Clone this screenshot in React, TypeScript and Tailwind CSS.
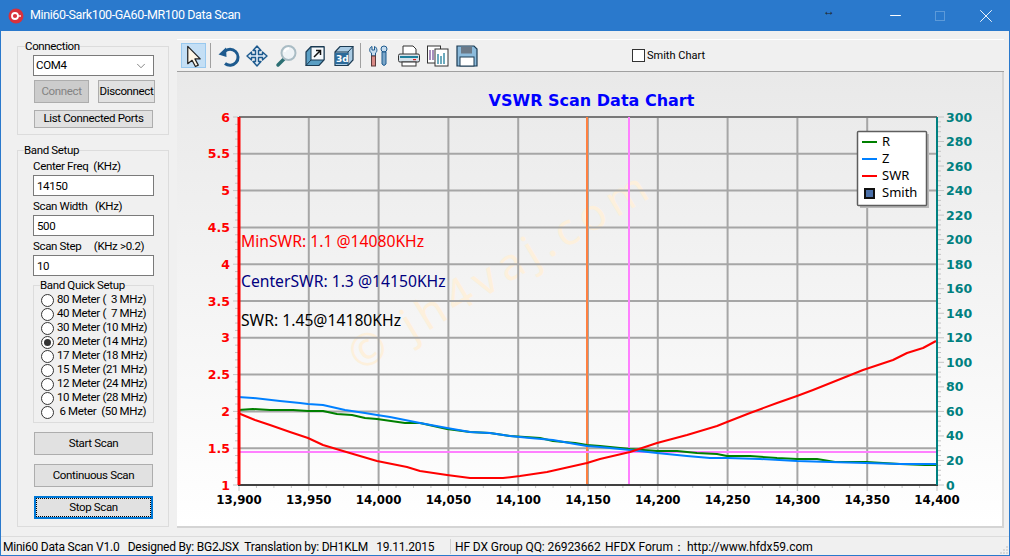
import { ChevronDown, Minus, X } from 'lucide-react'

const bands = [
  '80 Meter (  3 MHz)',
  '40 Meter (  7 MHz)',
  '30 Meter (10 MHz)',
  '20 Meter (14 MHz)',
  '17 Meter (18 MHz)',
  '15 Meter (21 MHz)',
  '12 Meter (24 MHz)',
  '10 Meter (28 MHz)',
  ' 6 Meter  (50 MHz)',
]

const swr = '238,413 255,420 270,425 290,432 308,438 323,445 343,451 360,456 377,461 407,467 420,471 447,475 470,478 503,478 520,476 547,472 587,463 600,459 630,452 657,443 687,435 717,426 727,422 750,413 777,403 797,396 813,390 823,386 843,378 863,370 893,360 907,353 923,348 936,341'
const rLine = '238,410 253,409 270,410 293,410 308,411 323,411 337,414 352,415 365,418 377,419 405,423 420,423 447,429 470,432 490,433 510,436 540,438 553,441 575,443 587,445 600,446 630,449 657,451 677,451 697,453 717,454 727,456 750,456 777,458 797,459 817,459 835,462 866,462 900,464 925,465 936,465'
const zLine = '238,397 253,398 280,401 300,403 308,404 323,405 345,410 365,413 377,415 390,417 420,423 447,428 470,432 490,433 510,436 530,438 553,440 575,444 587,446 600,447 630,450 657,453 677,455 687,456 710,458 727,458 760,459 797,461 830,462 866,463 900,464 936,464'

const yLeft = (v: number) => 485 - (v - 1) * 73.6
const leftLabels = ['1', '1.5', '2', '2.5', '3', '3.5', '4', '4.5', '5', '5.5', '6']
const rightLabels = Array.from({ length: 16 }, (_, i) => i * 20)
const xLabels = ['13,900', '13,950', '14,000', '14,050', '14,100', '14,150', '14,200', '14,250', '14,300', '14,350', '14,400']
const xAt = (i: number) => 239 + i * 69.8

function Chart() {
  return (
    <svg viewBox="177 72 825 454" className="block h-[454px] w-[825px] tracking-normal">
      {/* watermark */}
      <text
        x="360"
        y="372"
        transform="rotate(-31 360 372)"
        fontFamily="'Noto Sans', sans-serif"
        fontSize="44"
        fill="#fdf0dc"
        textLength="340"
      >
        © jh4vaj.com
      </text>

      {xLabels.slice(1, 10).map((_, i) => (
        <line key={i} x1={xAt(i + 1)} x2={xAt(i + 1)} y1="117" y2="485" stroke="#a6a6a6" strokeWidth="2" />
      ))}
      {leftLabels.slice(1, 10).map((_, i) => (
        <line key={i} x1="239" x2="937" y1={yLeft(1.5 + i * 0.5)} y2={yLeft(1.5 + i * 0.5)} stroke="#a6a6a6" strokeWidth="2" />
      ))}
      <line x1="239" x2="937" y1="117" y2="117" stroke="#787878" strokeWidth="2" />

      {/* axis ticks */}
      {Array.from({ length: 51 }, (_, i) => (
        <line key={i} x1={i % 5 === 0 ? 233 : 235} x2="238" y1={485 - i * 7.36} y2={485 - i * 7.36} stroke="#c4c4c4" />
      ))}
      {Array.from({ length: 76 }, (_, i) => (
        <line key={i} x1="938" x2={i % 5 === 0 ? 944 : 941} y1={485 - i * 4.907} y2={485 - i * 4.907} stroke="#c4c4c4" />
      ))}
      {Array.from({ length: 41 }, (_, i) => (
        <line key={i} x1={239 + i * 17.45} x2={239 + i * 17.45} y1="486" y2={i % 4 === 0 ? 491 : 488} stroke="#c4c4c4" />
      ))}

      <line x1="587" x2="587" y1="117" y2="485" stroke="#ff8040" strokeWidth="2" />
      <line x1="629" x2="629" y1="117" y2="485" stroke="#ff80ff" strokeWidth="2" />
      <line x1="239" x2="937" y1="452" y2="452" stroke="#ff80ff" strokeWidth="2" />

      <polyline points={rLine} fill="none" stroke="#008000" strokeWidth="2" strokeLinejoin="round" />
      <polyline points={zLine} fill="none" stroke="#0080ff" strokeWidth="2" strokeLinejoin="round" />
      <polyline points={swr} fill="none" stroke="#ff0000" strokeWidth="2" strokeLinejoin="round" />

      <line x1="238" x2="938" y1="485" y2="485" stroke="#404040" strokeWidth="2" />
      <line x1="239" x2="239" y1="117" y2="485" stroke="#ff0000" strokeWidth="3" />
      <line x1="937" x2="937" y1="117" y2="485" stroke="#008080" strokeWidth="2" />

      <g fontFamily="'DejaVu Sans', sans-serif" fontWeight="700" fontSize="12.5">
        {leftLabels.map((l, i) => (
          <text key={l} x="230" y={489.5 - i * 36.8} textAnchor="end" fill="#ff0000">{l}</text>
        ))}
        {rightLabels.map((l, i) => (
          <text key={l} x="946" y={489.5 - i * 24.53} fill="#008080">{l}</text>
        ))}
        {xLabels.map((l, i) => (
          <text key={l} x={xAt(i)} y="504" textAnchor="middle" fill="#000" fontSize="11.8">{l}</text>
        ))}
        <text x="591.5" y="106" textAnchor="middle" fontSize="16" fill="#0000ff">VSWR Scan Data Chart</text>
      </g>

      <g fontFamily="'Noto Sans', sans-serif" fontSize="15.7">
        <text x="241" y="247" fill="#ff0000">MinSWR: 1.1 @14080KHz</text>
        <text x="241" y="287" fill="#000080">CenterSWR: 1.3 @14150KHz</text>
        <text x="241" y="326" fill="#000">SWR: 1.45@14180KHz</text>
      </g>

      {/* legend */}
      <rect x="860" y="134" width="69" height="74" fill="#b8b8b8" />
      <rect x="857.5" y="131.5" width="69" height="74" rx="1" fill="#fff" stroke="#5e5e5e" strokeWidth="1.5" />
      <line x1="862" x2="877" y1="142" y2="142" stroke="#008000" strokeWidth="2" />
      <line x1="862" x2="877" y1="159" y2="159" stroke="#0080ff" strokeWidth="2" />
      <line x1="862" x2="877" y1="176" y2="176" stroke="#ff0000" strokeWidth="2" />
      <rect x="865" y="189" width="9" height="9" fill="#4a6fa8" stroke="#101010" strokeWidth="2" />
      <g fontFamily="'Noto Sans', sans-serif" fontSize="13" fill="#000">
        <text x="882" y="146">R</text>
        <text x="882" y="163">Z</text>
        <text x="882" y="180">SWR</text>
        <text x="882" y="197">Smith</text>
      </g>
    </svg>
  )
}

function Btn({ label, className }: { label: string; className: string }) {
  return (
    <button className={`flex items-center justify-center border border-[#adadad] bg-[#e1e1e1] text-black ${className}`}>
      {label}
    </button>
  )
}

function Field({ label, value }: { label: string; value: string }) {
  return (
    <div className="ml-[15px]">
      <div className="h-[14px] whitespace-pre leading-[14px]">{label}</div>
      <input
        readOnly
        value={value}
        className="mt-[2px] block h-[21px] w-[121px] border border-[#7a7a7a] bg-white px-[3px] text-black outline-none"
      />
    </div>
  )
}

// toolbar drawings
const ICON_BLUE = '#1d5a8e'

const icons = [
  <svg key="undo" viewBox="0 0 24 24" className="h-6 w-6">
    <path d="M8.5 7.5 A8 8 0 1 1 9 19.5" fill="none" stroke={ICON_BLUE} strokeWidth="3" />
    <path d="M2.5 10.5 L10 3.5 L10.5 13 Z" fill={ICON_BLUE} />
  </svg>,
  <svg key="move" viewBox="0 0 24 24" className="h-6 w-6">
    <path d="M12 2 L16 6.5 H13.5 V10.5 H17.5 V8 L22 12 L17.5 16 V13.5 H13.5 V17.5 H16 L12 22 L8 17.5 H10.5 V13.5 H6.5 V16 L2 12 L6.5 8 V10.5 H10.5 V6.5 H8 Z" fill="#dbe8f4" stroke={ICON_BLUE} strokeWidth="1.4" strokeLinejoin="round" />
  </svg>,
  <svg key="zoom" viewBox="0 0 24 24" className="h-6 w-6">
    <line x1="4" y1="21" x2="10" y2="15" stroke="#2c6f73" strokeWidth="3.5" strokeLinecap="round" />
    <circle cx="14.5" cy="9" r="7" fill="#eef3f6" stroke="#a9bcc4" strokeWidth="2" />
    <path d="M10.5 8 A4.5 4.5 0 0 1 15 4.5" fill="none" stroke="#fff" strokeWidth="2" />
  </svg>,
  <svg key="box" viewBox="0 0 24 24" className="h-6 w-6">
    <path d="M3 8 L8 2.5 H21 V16 L16 21.5 H3 Z" fill="#5b9fc4" stroke="#1b3a52" strokeWidth="1.2" />
    <path d="M8 3 H21 V16 H8 Z" fill="#f4f8fb" stroke="#1b3a52" />
    <path d="M3 21.5 L8 16" stroke="#1b3a52" />
    <path d="M11 13 L17 7 M13 6.5 H17.5 V11" fill="none" stroke="#111" strokeWidth="1.5" />
  </svg>,
  <svg key="3d" viewBox="0 0 24 24" className="h-6 w-6 tracking-normal">
    <path d="M3 8 L8 2.5 H21 V16 L16 21.5 H3 Z" fill="#a9cbe4" stroke="#1b3a52" strokeWidth="1.2" />
    <path d="M3 8 H16 V21.5 M16 8 L21 2.5" fill="none" stroke="#1b3a52" />
    <rect x="3" y="9" width="13" height="11" fill="#2d6b9a" />
    <text x="4" y="18" fontFamily="'DejaVu Sans', sans-serif" fontWeight="700" fontSize="9" fill="#fff">3d</text>
  </svg>,
  <svg key="tools" viewBox="0 0 24 24" className="h-6 w-6">
    <path d="M4 2.5 V6 H6.5 V2.5 C9.5 3.5 9.5 8 7.5 9 V12 H3.5 V9 C1 8 1 3.5 4 2.5 Z" fill="#c6dcee" stroke={ICON_BLUE} />
    <rect x="3.5" y="12" width="4" height="10" fill="#d98a86" stroke="#5a3a3a" />
    <circle cx="16" cy="5" r="3" fill="#c6dcee" stroke={ICON_BLUE} />
    <path d="M14 8 H18 V20 Q16 23 14 20 Z" fill="#7ba6c9" stroke={ICON_BLUE} />
  </svg>,
  <svg key="print" viewBox="0 0 24 24" className="h-6 w-6">
    <path d="M6 2 H16 L19 5 V11 H6 Z" fill="#fff" stroke="#333" />
    <rect x="1.5" y="10" width="21" height="8" rx="1.5" fill="#d6e2ea" stroke="#333" />
    <rect x="3" y="12" width="18" height="2" fill="#1f7f9c" />
    <rect x="16" y="15" width="3" height="1.2" fill="#e02020" />
    <rect x="5" y="18" width="14" height="4" fill="#fff" stroke="#333" />
  </svg>,
  <svg key="copy" viewBox="0 0 24 24" className="h-6 w-6">
    <rect x="1.5" y="2" width="13" height="17" fill="#fff" stroke="#333" />
    <rect x="9" y="5" width="13" height="17" fill="#fff" stroke="#333" />
    <path d="M4 6 V16 M7 6 V16" stroke="#8a6aa8" strokeWidth="1.5" />
    <path d="M12 10 V20 M15 12 V20 M18 9 V20" stroke="#3d8fa8" strokeWidth="1.5" />
  </svg>,
  <svg key="save" viewBox="0 0 24 24" className="h-6 w-6">
    <path d="M2 2 H19 L22 5 V22 H2 Z" fill="#8cbbdc" stroke="#1b3a52" strokeWidth="1.2" />
    <rect x="6" y="2.5" width="11" height="7" fill="#6c7a88" />
    <rect x="5" y="13" width="14" height="9" fill="#fff" stroke="#1b3a52" />
  </svg>,
]

export default function App() {
  return (
    <div className="flex h-[556px] w-[1010px] flex-col overflow-hidden border-x border-b border-[#2a79cc] bg-[#f0f0f0] font-['Roboto',sans-serif] text-[11.5px] tracking-[-0.35px] text-black">
      <div className="-mx-px flex h-[31px] shrink-0 items-center bg-[#2a79cc] text-white">
        <svg viewBox="0 0 16 16" className="ml-[8px] h-[16px] w-[16px]">
          <circle cx="8" cy="8" r="7.5" fill="#d8323c" />
          <circle cx="7" cy="8" r="3" fill="none" stroke="#fff" strokeWidth="1.8" />
          <path d="M10 8 H13" stroke="#fff" strokeWidth="1.4" />
        </svg>
        <span className="ml-[6px] w-[210px] whitespace-nowrap text-[12.5px] tracking-[-0.4px]">Mini60-Sark100-GA60-MR100 Data Scan</span>
        <span className="ml-[583px] -mt-[10px] w-[12px] text-[12px] leading-none text-[#222]">↔</span>
        <Minus size={17} strokeWidth={1.4} className="ml-[52px]" />
        <div className="ml-[31px] h-[10px] w-[10px] border border-[#5c9ad9]" />
        <X size={22} strokeWidth={1} className="ml-[30px]" />
      </div>

      <div className="flex min-h-0 flex-1">
        <div className="w-[176px] shrink-0 pl-[16px] pt-[8px]">
          <fieldset className="h-[96px] w-[152px] border border-[#dcdcdc]">
            <legend className="ml-[7px] h-[14px] px-0 leading-[14px]">Connection</legend>
            <div className="ml-[15px] mt-[2px] flex h-[21px] w-[121px] items-center justify-between border border-[#7a7a7a] bg-white pl-[2px] pr-[5px]">
              <span>COM4</span>
              <ChevronDown size={14} strokeWidth={1.2} className="text-[#555]" />
            </div>
            <div className="ml-[16px] mt-[4px] flex gap-[9px]">
              <button className="h-[23px] w-[55px] border border-[#adadad] bg-[#cccccc] text-[#838383]">Connect</button>
              <Btn label="Disconnect" className="h-[23px] w-[57px]" />
            </div>
            <Btn label="List Connected Ports" className="ml-[16px] mt-[7px] h-[18px] w-[119px]" />
          </fieldset>

          <fieldset className="mt-[8px] h-[384px] w-[152px] border border-[#dcdcdc]">
            <legend className="ml-[6px] h-[14px] px-0 leading-[14px]">Band Setup</legend>
            <div className="mt-[2px] flex flex-col gap-[3px]">
              <Field label="Center Freq  (KHz)" value="14150" />
              <Field label="Scan Width   (KHz)" value="500" />
              <Field label="Scan Step     (KHz >0.2)" value="10" />
            </div>
            <fieldset className="ml-[15px] mt-[2px] h-[145px] w-[121px] border border-[#dcdcdc]">
              <legend className="ml-[6px] h-[14px] px-0 leading-[14px]">Band Quick Setup</legend>
              <div className="ml-[7px] mt-[1px] flex flex-col">
                {bands.map((b, i) => (
                  <div key={b} className="flex h-[14px] items-center gap-[3px]">
                    <span className="flex h-[13px] w-[13px] items-center justify-center rounded-full border border-[#333] bg-white">
                      {i === 3 && <span className="h-[7px] w-[7px] rounded-full bg-[#333]" />}
                    </span>
                    <span className="whitespace-pre">{b}</span>
                  </div>
                ))}
              </div>
            </fieldset>
            <div className="ml-[16px] mt-[9px] flex flex-col gap-[9px]">
              <Btn label="Start Scan" className="h-[23px] w-[119px]" />
              <Btn label="Continuous Scan" className="h-[23px] w-[119px]" />
              <button className="flex h-[23px] w-[119px] items-center justify-center border-2 border-[#0078d7] bg-[#e1e1e1] outline-1 -outline-offset-3 outline-dotted outline-black">
                Stop Scan
              </button>
            </div>
          </fieldset>
        </div>

        <div className="flex flex-col pt-[8px]">
          <div className="flex h-[33px] w-[827px] items-center border-t border-b border-t-white border-b-[#a0a0a0] pl-[4px]">
            <div className="flex h-[25px] w-[25px] items-center justify-center border border-[#99c9ef] bg-[#c4dff5]">
              <svg viewBox="0 0 24 24" className="h-6 w-6">
                <path d="M6 2 L19 15 H13.5 L17 21.5 L14 23 L10.5 16.5 L6 20 Z" fill="#fff6e6" stroke="#222" strokeWidth="1.3" strokeLinejoin="round" />
              </svg>
            </div>
            <div className="ml-[4px] h-[25px] w-px bg-[#a0a0a0]" />
            <div className="ml-[2px] flex">
              {icons.slice(0, 5).map(ic => (
                <div key={ic.key} className="flex h-[25px] w-[29px] items-center justify-center">{ic}</div>
              ))}
            </div>
            <div className="ml-[2px] h-[25px] w-px bg-[#a0a0a0]" />
            <div className="ml-[4px] flex">
              {icons.slice(5).map(ic => (
                <div key={ic.key} className="flex h-[25px] w-[29px] items-center justify-center">{ic}</div>
              ))}
            </div>
            <div className="ml-[151px] h-[13px] w-[13px] border border-[#333] bg-white" />
            <span className="ml-[2px] mt-px text-[11px] tracking-normal">Smith Chart</span>
          </div>
          <div className="w-[827px] border-b-2 border-r-2 border-[#d4d4d4] bg-linear-to-b from-[#e9e9e9] to-white">
            <Chart />
          </div>
        </div>
      </div>

      <div className="flex h-[19px] shrink-0 items-center border-t border-[#dcdcdc] pl-[2px] pt-px text-[12px] tracking-normal">
        <span className="w-[447px] whitespace-pre tracking-[-0.22px]">Mini60 Data Scan V1.0   Designed By: BG2JSX  Translation by: DH1KLM   19.11.2015</span>
        <div className="h-[15px] w-px bg-[#d0d0d0]" />
        <span className="ml-[4px] w-[150px] whitespace-pre tracking-[-0.1px]">HF DX Group QQ: 26923662</span>
        <span className="w-[82px] whitespace-pre">HFDX Forum：</span>
        <span>http://www.hfdx59.com</span>
        <svg viewBox="0 0 10 10" className="ml-auto h-[10px] w-[10px] self-end">
          <path d="M8 1.5 V2.5 M5 4.5 V5.5 M8 4.5 V5.5 M2 7.5 V8.5 M5 7.5 V8.5 M8 7.5 V8.5" stroke="#b0b0b0" strokeWidth="1.5" />
        </svg>
      </div>
    </div>
  )
}
